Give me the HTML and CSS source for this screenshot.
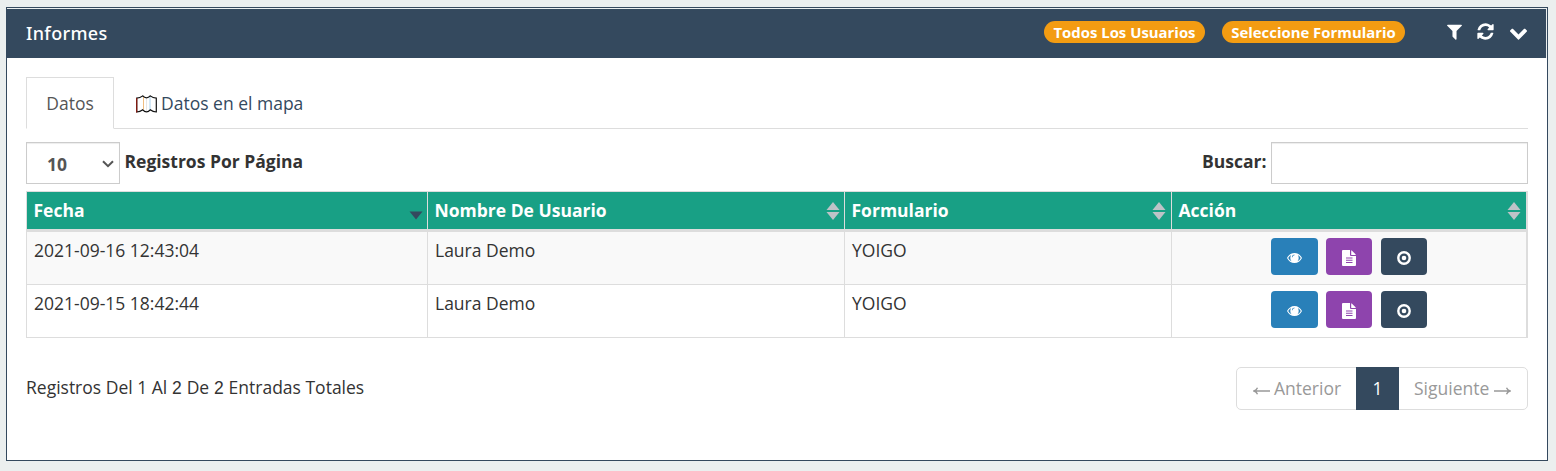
FILE: index.html
```
<!DOCTYPE html>
<html lang="es">
<head>
<meta charset="utf-8">
<title>Informes</title>
<link rel="stylesheet" href="styles.css">
</head>
<body>
<svg class="defs" width="0" height="0" aria-hidden="true">
  <symbol id="eye" viewBox="0 0 15 10"><path fill-rule="evenodd" d="M7.500 0C10.800 0 13.500 2 15 5C13.500 8 10.800 10 7.500 10S1.500 8 0 5C1.500 2 4.200 0 7.500 0ZM4.200 1.900Q2.300 3 1.200 5Q2.300 7.200 4.500 8.300Q3.300 7 3.300 5Q3.300 3.200 4.200 1.900ZM10.800 1.900Q11.700 3.200 11.700 5Q11.700 7 10.500 8.300Q12.700 7.200 13.800 5Q12.700 3 10.800 1.900ZM7.500 1.500Q5 1.700 4.800 4.200H5.500Q5.700 2.400 7.500 2.200Z"/></symbol>
  <symbol id="file" viewBox="0 0 14 16"><path fill-rule="evenodd" d="M1 0H8V5Q8 6 9 6H14V15Q14 16 13 16H1Q0 16 0 15V1Q0 0 1 0ZM9.200 0.200Q9.700 0.400 10 0.700L13.300 4Q13.700 4.400 13.800 4.900H9.200ZM4 7.500V8.500H10.500V7.500ZM4 9.800V10.800H10.500V9.800ZM4 12.100V13.100H10.500V12.100Z"/></symbol>
  <symbol id="dot" viewBox="0 0 14 14"><circle cx="7" cy="7" r="5.700" fill="none" stroke="currentColor" stroke-width="2.400"/><circle cx="7" cy="7" r="2.300"/></symbol>
  <symbol id="sort" viewBox="0 0 14 18"><path d="M7 0L13.500 8H.5ZM7 18L13.500 10H.5Z"/></symbol>
</svg>
<section class="panel">
  <header class="panel-head">
    <h1>Informes</h1>
    <span class="pill users"><span>Todos Los Usuarios</span></span>
    <span class="pill form"><span>Seleccione Formulario</span></span>
    <nav class="tools">
      <svg class="filter" viewBox="0 0 1792 1792"><path d="M1595 295q17 41-14 70l-493 493v742q0 42-39 59-13 5-25 5-27 0-45-19l-256-256q-19-19-19-45v-486l-493-493q-31-29-14-70 17-39 59-39h1280q42 0 59 39z"/></svg>
      <svg class="refresh" viewBox="0 0 1792 1792"><path d="M1639 1056q0 5-1 7-64 268-268 434.500t-478 166.500q-146 0-282.500-55t-243.500-157l-129 129q-19 19-45 19t-45-19-19-45v-448q0-26 19-45t45-19h448q26 0 45 19t19 45-19 45l-137 137q71 66 161 102t187 36q134 0 250-65t186-179q11-17 53-117 8-23 30-23h192q13 0 22.500 9.500t9.500 22.500zm25-800v448q0 26-19 45t-45 19h-448q-26 0-45-19t-19-45 19-45l138-138q-148-137-349-137-134 0-250 65t-186 179q-11 17-53 117-8 23-30 23h-199q-13 0-22.500-9.500t-9.500-22.500v-7q65-268 270-434.500t480-166.500q146 0 284 55.500t245 156.500l130-129q19-19 45-19t45 19 19 45z"/></svg>
      <svg class="chevron" viewBox="0 0 1792 1792"><path d="M1683 808l-742 741q-19 19-45 19t-45-19l-742-741q-19-19-19-45.500t19-45.500l166-165q19-19 45-19t45 19l531 531 531-531q19-19 45-19t45 19l166 165q19 19 19 45.500t-19 45.500z"/></svg>
    </nav>
  </header>
  <div class="panel-body">
    <div class="tabs">
      <a class="tab active"><span>Datos</span></a>
      <a class="tab">
        <svg class="map" viewBox="0 0 21 18"><path fill="none" stroke="#f0bd80" d="M7.500 1.500V14.500"/><path fill="none" stroke="#a9d2ee" d="M14 1.500V15"/><path fill="none" stroke="#e6e6e6" d="M10.500 3.500V16"/><path fill="none" stroke="#111" stroke-width="1.200" d="M.7 3.200Q4 3.200 6.800 .9 8.500 2.800 10.500 2.800 12.500 2.800 14.200 .9 17 3.200 20.300 3.200V17Q17 17 14.200 14.800 12.500 16.800 10.500 16.800 8.500 16.800 6.800 14.800 4 17 .7 17Z"/><path fill="none" stroke="#8b1a10" stroke-width="1.200" d="M.7 3V17.500"/></svg>
        <span>Datos en el mapa</span>
      </a>
    </div>
    <div class="controls">
      <div class="select"><span>10</span><svg viewBox="0 0 12 8"><path d="M1 1.200L6 6.200L11 1.200"/></svg></div>
      <label class="per-page"><span>Registros Por Página</span></label>
      <label class="search-label" for="search"><span>Buscar:</span></label>
      <input id="search" class="search" type="text">
    </div>
    <table class="grid">
      <colgroup><col class="c1"><col class="c2"><col class="c3"><col class="c4"></colgroup>
      <thead>
        <tr>
          <th><div><span>Fecha</span><svg class="sort desc" viewBox="0 0 14 18"><path d="M7 17.500L13.500 9.500H.5Z"/></svg></div></th>
          <th><div><span>Nombre De Usuario</span><svg class="sort"><use href="#sort"/></svg></div></th>
          <th><div><span>Formulario</span><svg class="sort"><use href="#sort"/></svg></div></th>
          <th><div><span>Acción</span><svg class="sort"><use href="#sort"/></svg></div></th>
        </tr>
      </thead>
      <tbody>
        <tr>
          <td>2021-09-16 12:43:04</td><td>Laura Demo</td><td>YOIGO</td>
          <td class="actions"><div><a class="btn blue"><svg class="i-eye"><use href="#eye"/></svg></a><a class="btn purple"><svg class="i-file"><use href="#file"/></svg></a><a class="btn dark"><svg class="i-dot"><use href="#dot"/></svg></a></div></td>
        </tr>
        <tr>
          <td>2021-09-15 18:42:44</td><td>Laura Demo</td><td>YOIGO</td>
          <td class="actions"><div><a class="btn blue"><svg class="i-eye"><use href="#eye"/></svg></a><a class="btn purple"><svg class="i-file"><use href="#file"/></svg></a><a class="btn dark"><svg class="i-dot"><use href="#dot"/></svg></a></div></td>
        </tr>
      </tbody>
    </table>
    <footer class="foot">
      <div class="info">Registros Del 1 Al <span class="num">2</span> De <span class="num">2</span> Entradas Totales</div>
      <div class="pager">
        <a class="prev"><svg class="arrow" viewBox="0 0 17 8"><path d="M17 4H1M4.500 .8Q3.500 3.200 1 4Q3.500 4.800 4.500 7.200"/></svg><span>Anterior</span></a><a class="current">1</a><a class="next"><span>Siguiente</span><svg class="arrow" viewBox="0 0 17 8"><path d="M0 4H16M12.500 .8Q13.500 3.200 16 4Q13.500 4.800 12.500 7.200"/></svg></a>
      </div>
    </footer>
  </div>
</section>
</body>
</html>
```
FILE: styles.css
```
* { box-sizing: border-box; }
body {
  margin: 0;
  height: 471px;
  padding: 7px 8px 10px 6px;
  background: #ebefef;
  color: #333;
  font: 17.5px/25px "Open Sans", sans-serif;
  overflow: hidden;
}
.defs { position: absolute; }
svg { display: block; fill: currentColor; flex: none; }
.panel { height: 454px; border: 1px solid #34495e; background: #fff; }
.panel-head {
  display: flex;
  align-items: center;
  height: 50px;
  padding: 0 19px;
  border-top: 1px solid #ebefef;
  border-right: 1px solid #ebefef;
  background: #34495e;
  color: #fff;
}
h1 { margin: 0 auto 2px 0; font: 500 18px/26px "Noto Sans", sans-serif; letter-spacing: .35px; }
.pill {
  display: flex;
  justify-content: center;
  align-items: center;
  height: 22px;
  border-radius: 11px;
  background: #f39c12;
  font-size: 14.900px;
  font-weight: 700;
  line-height: 22px;
  white-space: nowrap;
  margin-bottom: 4px;
}
.users { width: 161px; margin-right: 17px; }
.form { width: 183px; margin-right: 40px; }
.tools { display: flex; align-items: center; width: 83px; margin-right: -1px; margin-bottom: 4px; }
.tools svg { width: 19px; height: 19px; }
.tools .refresh { margin-left: 12px; width: 19px; height: 19px; }
.tools .chevron { margin-left: 14px; margin-top: 1px; }
.panel-body { padding: 19px 19px 0; }
.tabs { display: flex; height: 52px; border-bottom: 1px solid #ddd; }
.tab { display: flex; align-items: center; color: #34495e; padding: 2px 0 0 22px; }
.tab.active {
  width: 88px;
  height: 52px;
  padding: 0;
  justify-content: center;
  border: 1px solid #ddd;
  border-bottom-color: #fff;
  background: #fff;
  color: #555;
}
.map { width: 21px; height: 18px; margin-right: 4px; }
.controls { display: flex; height: 42px; margin-top: 13px; font-weight: 700; }
.select {
  display: flex;
  align-items: center;
  justify-content: space-between;
  width: 94px;
  height: 42px;
  padding: 3px 5px 0 20px;
  border: 1px solid #ccc;
  box-shadow: inset 0 1px 1px rgba(0,0,0,.075);
  color: #555;
}
.select svg { width: 12px; height: 8px; fill: none; stroke: #555; stroke-width: 2; margin-bottom: 2px; }
.per-page { padding: 7px 0 0 4.500px; }
.search-label { margin-left: auto; padding: 7px 4.500px 0 0; }
.search { width: 257px; height: 42px; border: 1px solid #ccc; background: #fff; box-shadow: inset 0 1px 1px rgba(0,0,0,.075); }
.grid {
  width: 1502px;
  margin-top: 7px;
  table-layout: fixed;
  border-collapse: separate;
  border-spacing: 0;
  border-top: 1px solid #ddd;
  border-right: 2px solid #ddd;
}
.c1 { width: 401px; }
.c2 { width: 417px; }
.c3 { width: 327px; }
.c4 { width: 355px; }
th { height: 40px; padding: 0 5px 0 6.500px; border-left: 1px solid #ddd; border-bottom: 3px solid #ddd; background: #18a085; color: #fff; text-align: left; }
th div { display: flex; align-items: center; justify-content: space-between; }
.sort { width: 14px; height: 18px; color: #bdc3c7; }
th:nth-child(-n+2) .sort { margin-right: -1px; }
.desc { color: #34495e; }
td { height: 53px; padding: 6px 7px; border-left: 1px solid #ddd; border-bottom: 1px solid #ddd; vertical-align: top; }
tbody tr:first-child td { background: #f9f9f9; }
.actions div { display: flex; justify-content: center; padding-right: 1px; }
.btn { display: flex; align-items: center; justify-content: center; width: 46px; height: 37px; border-radius: 4px; color: #fff; padding-top: 2px; }
.blue { width: 47px; background: #2980b9; }
.purple { margin: 0 9px 0 8px; background: #8e44ad; }
.dark { background: #34495e; }
.i-eye { width: 15px; height: 10px; margin-top: 1px; }
.i-file { width: 14px; height: 16px; }
.i-dot { width: 14px; height: 14px; }
.foot { display: flex; justify-content: space-between; margin-top: 29px; }
.info { padding-top: 8px; }
.num { font-family: "Liberation Sans", sans-serif; font-size: 17.500px; margin: 0 .300px; }
.pager { display: flex; width: 292px; height: 43px; border: 1px solid #ddd; border-radius: 5px; color: #999; }
.pager a { display: flex; align-items: center; }
.prev { width: 119px; padding-left: 16px; }
.prev .arrow { margin-right: 4px; }
.current { width: 43px; height: 43px; margin-top: -1px; justify-content: center; background: #34495e; color: #fff; }
.next { padding-left: 15px; }
.next .arrow { margin-left: 5px; }
.arrow { width: 17px; height: 8px; fill: none; stroke: #999; stroke-width: 1.400; margin-top: 4px; }
```
